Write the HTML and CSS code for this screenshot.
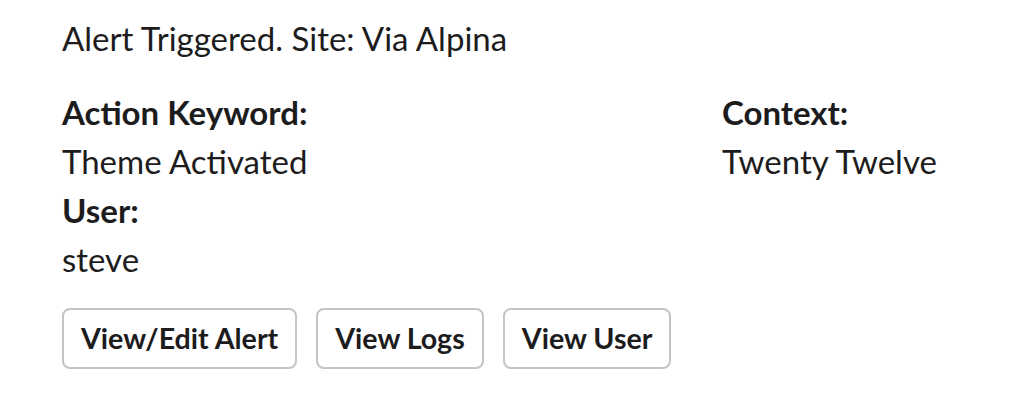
FILE: index.html
```html
<!DOCTYPE html>
<html>
<head>
<meta charset="utf-8">
<link rel="stylesheet" href="styles.css">
</head>
<body>
<div class="msg">
  <div class="text">Alert Triggered. Site: Via Alpina</div>
  <div class="fields">
    <div class="field">
      <div class="title">Action Keyword:</div>
      <div class="value">Theme Activated</div>
    </div>
    <div class="field">
      <div class="title">Context:</div>
      <div class="value">Twenty Twelve</div>
    </div>
    <div class="field">
      <div class="title">User:</div>
      <div class="value">steve</div>
    </div>
  </div>
  <div class="actions">
    <button class="btn">View/Edit Alert</button>
    <button class="btn">View Logs</button>
    <button class="btn">View User</button>
  </div>
</div>
</body>
</html>
```
FILE: styles.css
```css
html, body {
  margin: 0;
  padding: 0;
  background: #ffffff;
}
body {
  font-family: Lato, "Open Sans", sans-serif;
  color: #1d1c1d;
  font-size: 33px;
  line-height: 49px;
}
.msg {
  padding: 14px 62px 0 62px;
}
.text {
  font-weight: 400;
}
.fields {
  margin-top: 25px;
  display: grid;
  grid-template-columns: 660px 1fr;
}
.title {
  font-weight: 700;
}
.value {
  font-weight: 400;
}
.actions {
  margin-top: 24px;
  display: flex;
  gap: 19px;
}
.btn {
  font-family: Lato, "Open Sans", sans-serif;
  font-weight: 700;
  font-size: 28.6px;
  color: #1d1c1d;
  background: #ffffff;
  border: 2px solid #c4c4c4;
  border-radius: 8px;
  height: 61px;
  padding: 0 17px;
  line-height: 1;
}
```
